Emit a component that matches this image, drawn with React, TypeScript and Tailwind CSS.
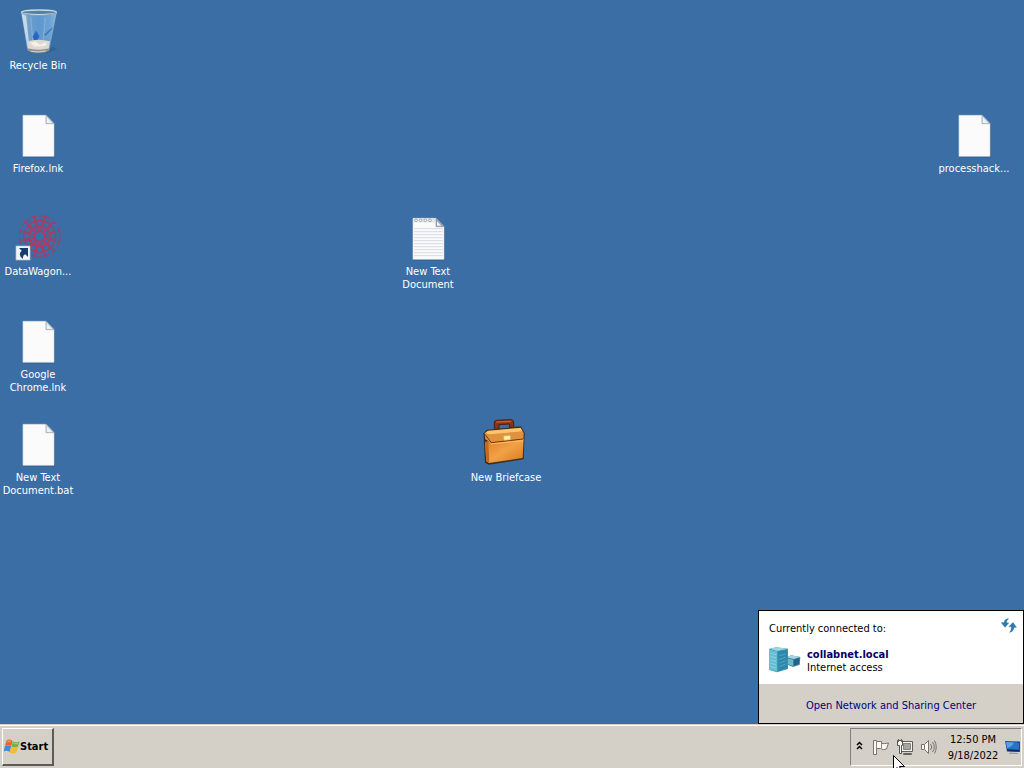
import type { ReactNode } from "react";

function RecycleBinIcon() {
  return (
    <svg viewBox="42 24 144 144" className="size-12 overflow-visible" aria-hidden="true">
      <defs>
        <linearGradient id="glass" x1="0" x2="1">
          <stop offset="0" stopColor="#b9d3e6" />
          <stop offset=".2" stopColor="#6f9fca" />
          <stop offset=".5" stopColor="#5f97ce" />
          <stop offset=".8" stopColor="#6ba3d4" />
          <stop offset="1" stopColor="#8db7d6" />
        </linearGradient>
      </defs>
      <path d="M132 150 L160 140 L172 148 L140 160 Z" fill="#2c5585" opacity=".5" />
      <path d="M64 38 L170 38 L148 150 Q115 166 82 150 Z" fill="url(#glass)" />
      <path d="M66 42 L84 148 L90 150 L78 48 Z" fill="#d5e6ef" opacity=".75" />
      <path d="M92 52 L98 120 M136 52 L130 122" stroke="#90b9dc" strokeWidth="4" opacity=".6" />
      <path d="M98 110 L108 92 L118 108 L112 122 L102 120 Z" fill="#2568c4" />
      <path d="M132 104 L158 80 L154 90 L136 108 Z" fill="#4278b0" />
      <path d="M82 124 Q115 114 150 124 L146 146 Q115 156 84 146 Z" fill="#dcd8d4" />
      <path d="M90 128 L106 124 L120 134 L140 126 L136 138 L104 140 Z" fill="#f5efe7" />
      <path d="M82 145 Q115 153 149 145 L146 154 Q115 164 86 154 Z" fill="#95938f" />
      <path d="M92 154 Q115 158 138 153" stroke="#d9d0ba" strokeWidth="3" fill="none" />
      <ellipse cx="117" cy="37" rx="52" ry="7" fill="#557f9e" stroke="#c6d9e4" strokeWidth="4" />
      <path d="M68 41 Q117 53 168 40" fill="none" stroke="#7da2b8" strokeWidth="3" />
    </svg>
  );
}

function FileIcon({ lined = false }: { lined?: boolean }) {
  return (
    <svg viewBox="0 0 144 144" className="size-12 overflow-visible" aria-hidden="true">
      <path d="M27 15 H98 L123 40 V139 H27 Z" fill="#2b4f78" opacity=".7" />
      <path d="M27 13 H96 L120 38 V136 H27 Z" fill="#fbfbfb" stroke="#d5dce2" strokeWidth="2" />
      {lined && (
        <>
          <path
            d="M31 44H116M31 53H116M31 62H116M31 71H116M31 80H116M31 89H116M31 98H116M31 107H116M31 116H116M31 125H116"
            stroke="#d3dae6"
            strokeWidth="3"
          />
          <path d="M28 14 H95 V25 H28 Z" fill="#e4e6e8" />
          <g fill="#fafafa" stroke="#84898e" strokeWidth="2">
            <circle cx="36" cy="19" r="4" />
            <circle cx="50" cy="19" r="4" />
            <circle cx="64" cy="19" r="4" />
            <circle cx="78" cy="19" r="4" />
          </g>
        </>
      )}
      <path d="M96 13 L120 38 H96 Z" fill={lined ? "#9aa3ad" : "#dde4ea"} stroke="#8b98a4" strokeWidth="2" />
      <path d="M99 22 L112 35 H99 Z" fill="#f1f4f6" />
    </svg>
  );
}

const petals = [0, 30, 60, 90, 120, 150, 180, 210, 240, 270, 300, 330];

function DataWagonIcon() {
  return (
    <svg viewBox="42 27 144 144" className="size-12 overflow-visible" aria-hidden="true">
      <g fill="none" stroke="#c92f50" strokeWidth="3" opacity=".8">
        {petals.map((angle) => (
          <g key={angle} transform={`rotate(${angle} 119 94)`}>
            <path d="M119 79 C136 70 134 48 119 46 C104 48 102 70 119 79" />
            <path d="M119 66 C136 58 140 36 127 29 M119 66 C102 58 98 36 111 29" strokeDasharray="12 3" />
          </g>
        ))}
        <circle cx="119" cy="94" r="15" strokeWidth="4" />
        <circle cx="119" cy="94" r="32" strokeDasharray="8 5" />
        <circle cx="119" cy="94" r="48" strokeDasharray="7 6" />
        <circle cx="119" cy="94" r="61" strokeDasharray="12 10" />
      </g>
      <rect x="48" y="123" width="42" height="42" fill="#f1f5fa" stroke="#b4c3d4" strokeWidth="2" />
      <path d="M57 129 H84 V156 L76 148 Q67 151 69 162 Q52 150 65 137 Z" fill="#173c6b" />
    </svg>
  );
}

function BriefcaseIcon() {
  return (
    <svg viewBox="51 30 144 144" className="size-12 overflow-visible" aria-hidden="true">
      <defs>
        <linearGradient id="leather" x1="0" y1="0" x2="1" y2="1">
          <stop offset="0" stopColor="#e07a20" />
          <stop offset=".5" stopColor="#f1a246" />
          <stop offset="1" stopColor="#d9771e" />
        </linearGradient>
      </defs>
      <path d="M88 58 V36 Q89 31 96 31 L139 29 Q145 30 146 36 V52 L134 53 V42 L102 44 V57 Z" fill="#8f3115" stroke="#41221a" strokeWidth="3" />
      <path d="M94 36 L139 34" stroke="#d4582a" strokeWidth="4" />
      <path d="M56 70 L66 59 L168 49 L179 70 L176 148 L72 164 L60 158 L57 102 Z" fill="#3b2e20" />
      <path d="M60 96 L71 94 L176 86 L173 144 L72 159 L64 154 Z" fill="url(#leather)" />
      <path d="M60 96 L70 94 L73 158 L64 154 Z" fill="#c7681f" />
      <path d="M59 70 L68 62 L167 53 L176 70 L175 88 L79 98 L61 88 Z" fill="#e0923f" />
      <path d="M61 69 L70 63 L167 54 L172 64 L72 73 Z" fill="#ffc56e" />
      <path d="M60 73 L79 98 L174 87" fill="none" stroke="#743311" strokeWidth="3" />
      <path d="M77 102 L174 92" stroke="#ffbc5e" strokeWidth="3" />
      <path d="M115 78 L136 76 L137 89 L117 91 Z" fill="#fff2ad" stroke="#d7a34c" strokeWidth="2" />
    </svg>
  );
}

function ServerIcon() {
  return (
    <svg viewBox="26 24 96 81" className="h-[27px] w-8 shrink-0" aria-hidden="true">
      <path d="M78 55 L92 49 L120 54 L118 77 L98 84 L78 76 Z" fill="#397f9e" />
      <path d="M78 55 L92 49 L120 54 L100 60 Z" fill="#a7d5df" />
      <path d="M80 58 L98 62 V81 L80 75 Z" fill="#6fb8cb" />
      <path d="M101 63 L116 57 V75 L101 80 Z" fill="#275f8b" />
      <path d="M27 29 L48 25 L83 29 V90 L50 100 L27 93 Z" fill="#3c9ab6" />
      <path d="M27 29 L48 25 L83 29 L51 36 Z" fill="#9dd5df" />
      <path d="M28 32 L50 37 V98 L28 92 Z" fill="#66bed2" />
      <path d="M54 37 L81 32 V88 L54 97 Z" fill="#2e88ab" />
      <path d="M31 43l16 4M31 53l16 4M31 63l16 4M31 73l16 4M31 83l16 4" stroke="#a5dde6" strokeWidth="2" />
      <path d="M57 50l19-5M57 61l19-6M57 72l19-7M57 83l19-8M84 66l10 2M84 72l10 2" stroke="#64b8ca" strokeWidth="2" />
    </svg>
  );
}

function RefreshIcon() {
  return (
    <svg viewBox="20 34 48 44" className="h-[15px] w-4" aria-hidden="true">
      <g fill="#3179ab" stroke="#b5d5e9" strokeWidth="2" paintOrder="stroke">
        <path d="M43 35 Q30 36 29 47 H20 L32 62 L44 48 H37 Q36 42 43 35Z" />
        <path d="M45 77 Q58 75 59 62 H67 L56 46 L43 60 H51 Q52 70 45 77Z" />
      </g>
    </svg>
  );
}

function WindowsLogo() {
  return (
    <svg viewBox="11 71 49 44" className="h-[15px] w-4 shrink-0" aria-hidden="true">
      <path d="M19 75 Q27 68 37 76 L33 92 Q24 85 14 91 Z" fill="#e8642c" />
      <path d="M38 77 Q48 83 59 77 L54 94 Q45 99 34 93 Z" fill="#75b33c" />
      <path d="M14 92 Q23 86 33 93 L28 110 Q20 103 10 108 Z" fill="#3e8ed4" />
      <path d="M33 94 Q43 100 54 95 L49 112 Q38 117 28 111 Z" fill="#f4bd30" />
      <path d="M22 76 Q28 72 33 76 L31 81 Q25 77 20 81Z M40 80 Q48 84 55 80 L53 85 Q46 88 39 84Z" fill="#fff" opacity=".3" />
    </svg>
  );
}

function FlagIcon() {
  return (
    <svg viewBox="0 0 16 16" className="size-4" aria-hidden="true">
      <path d="M.5 1.5 H3.5 V2.500 H8.500 V4.500 Q11 5 15.500 4 L13.500 10 Q10 11.500 7.500 9.500 H3.500 V15.500 H.5 Z" fill="#faf9f5" stroke="#77736c" />
      <path d="M3.500 3 V9.500 M8.500 4 V9" stroke="#8b8780" />
    </svg>
  );
}

function NetworkIcon() {
  return (
    <svg viewBox="0 0 16 16" className="size-4" aria-hidden="true">
      <path d="M4.500 2.500 H15.500 V12.500 H4.500 Z" fill="#f6f5f1" stroke="#5f5d59" />
      <path d="M6.500 4.500 H13.500 V10.500 H6.500 Z" fill="#a8a6a0" stroke="#85837d" />
      <path d="M6.500 14.500 H14.500 V15.500 H6.500 Z" fill="#f6f5f1" stroke="#64625d" />
      <path d="M.5 1.500 H5.500 V6.500 H4.500 V14.500 H2.500 V6.500 H.5 Z" fill="#f8f7f3" stroke="#555550" />
      <path d="M1.500 0 V3 M4.500 0 V3" stroke="#65635f" />
    </svg>
  );
}

function SpeakerIcon() {
  return (
    <svg viewBox="0 0 16 16" className="size-4" fill="none" stroke="#76736e" aria-hidden="true">
      <path d="M.5 5.500 H3.500 L7.500 1.500 V14.500 L3.500 10.500 H.5 Z" fill="#fbfaf7" />
      <path d="M3.500 6V10" />
      <path d="M9.500 5 Q12 8 9.500 11 M11.500 3 Q15 8 11.500 13 M13.500 1.500 Q17 8 13.500 14.500" />
    </svg>
  );
}

function DesktopIcon() {
  return (
    <svg viewBox="0 0 16 16" className="size-4" aria-hidden="true">
      <path d="M0 2 L15 2.500 V13 L2 12.500 Z" fill="#174a9c" />
      <path d="M1 3 L14 3.500 V10.500 L2.500 10 Z" fill="#2873ca" />
      <path d="M1 3 L9 3.500 Q7 8 2 9Z" fill="#5ca0e2" />
      <path d="M2 10.500 L14 11 V12.500 L2.500 12Z" fill="#102b59" />
      <path d="M5 13.500 L13 14 V15 H4Z" fill="#8e9daf" />
    </svg>
  );
}

type Shortcut = { name: string; label: ReactNode; cell: string; icon: ReactNode };

const shortcuts: Shortcut[] = [
  { name: "Recycle Bin", label: "Recycle Bin", cell: "col-start-1 row-start-1", icon: <RecycleBinIcon /> },
  { name: "Firefox.lnk", label: "Firefox.lnk", cell: "col-start-1 row-start-2", icon: <FileIcon /> },
  { name: "DataWagon", label: "DataWagon...", cell: "col-start-1 row-start-3", icon: <DataWagonIcon /> },
  { name: "Google Chrome.lnk", label: <>Google<br />Chrome.lnk</>, cell: "col-start-1 row-start-4", icon: <FileIcon /> },
  { name: "New Text Document.bat", label: <>New Text<br />Document.bat</>, cell: "col-start-1 row-start-5", icon: <FileIcon /> },
  { name: "New Text Document", label: <>New Text<br />Document</>, cell: "col-start-6 row-start-3", icon: <FileIcon lined /> },
  { name: "New Briefcase", label: "New Briefcase", cell: "col-start-7 row-start-5", icon: <BriefcaseIcon /> },
  { name: "processhack...", label: "processhack...", cell: "col-start-13 row-start-2", icon: <FileIcon /> },
];

function NetworkFlyout() {
  return (
    <section aria-label="Network" className="absolute right-0 bottom-0 w-[266px] border border-black bg-white">
      <div className="px-[10px] pt-[7px] pb-[10px]">
        <div className="flex h-[21px] items-start justify-between">
          <p className="pt-1">Currently connected to:</p>
          <button type="button" aria-label="Refresh" className="-mr-1">
            <RefreshIcon />
          </button>
        </div>
        <div className="mt-2 flex items-center gap-1.5">
          <ServerIcon />
          <div className="leading-[13px]">
            <p className="font-bold text-[#000066]">collabnet.local</p>
            <p>Internet access</p>
          </div>
        </div>
      </div>
      <div className="flex h-[39px] items-center justify-center bg-[#d4d0c8] pt-1">
        <a href="#sharing" className="whitespace-nowrap text-[#000080]">Open Network and Sharing Center</a>
      </div>
    </section>
  );
}

function Taskbar() {
  return (
    <footer className="flex h-11 shrink-0 items-stretch justify-between border-t border-[#d4d0c8] bg-[#d4d0c8] pr-0.5 pb-0.5 shadow-[inset_0_1px_0_#fff]">
      <button
        type="button"
        className="mt-[3px] ml-0.5 flex w-[52px] items-center border-t border-r-2 border-b-2 border-l border-t-white border-r-[#5d5b57] border-b-[#5d5b57] border-l-white pl-px font-bold"
      >
        <WindowsLogo />
        Start
      </button>
      <div className="mt-[3px] flex w-[172px] items-center border border-t-[#808080] border-r-white border-b-white border-l-[#808080] pl-1">
        <button type="button" aria-label="Show hidden icons" className="flex w-[18px] justify-start pb-1 pl-px">
          <svg viewBox="0 0 7 9" className="h-[9px] w-[7px]" fill="none" stroke="#000" strokeWidth="1.500" aria-hidden="true">
            <path d="M1 4 L3.500 1.500 L6 4 M1 8 L3.500 5.500 L6 8" />
          </svg>
        </button>
        <div className="flex gap-2">
          <button type="button" aria-label="Action Center"><FlagIcon /></button>
          <button type="button" aria-label="Network"><NetworkIcon /></button>
          <button type="button" aria-label="Volume"><SpeakerIcon /></button>
        </div>
        <div className="flex-1 pt-px pl-1 text-center leading-4 whitespace-nowrap">
          <p>12:50 PM</p>
          <p>9/18/2022</p>
        </div>
        <button type="button" aria-label="Display"><DesktopIcon /></button>
      </div>
    </footer>
  );
}

export default function App() {
  return (
    <div className="relative flex min-h-screen flex-col overflow-hidden bg-[#3a6ea5] font-['Tahoma','DejaVu_Sans_Condensed',sans-serif] text-[11px] leading-[13px] text-black">
      <main className="relative flex-1">
        <div className="grid auto-rows-[103px] grid-cols-[repeat(13,76px)] gap-x-0.5">
          {shortcuts.map((s) => (
            <button
              key={s.name}
              type="button"
              aria-label={s.name}
              className={`${s.cell} flex flex-col items-center justify-start gap-[3px] pt-2 whitespace-nowrap text-white`}
            >
              {s.icon}
              <span>{s.label}</span>
            </button>
          ))}
        </div>
        <NetworkFlyout />
      </main>
      <Taskbar />
      <svg viewBox="0 0 12 19" className="pointer-events-none absolute right-[119px] -bottom-[6px] h-[19px] w-3" aria-hidden="true">
        <path d="M.5 .5 V16 L4 12.500 L6.500 18.500 L9 17.500 L6.500 11.500 H11.500 Z" fill="#fff" stroke="#000" />
      </svg>
    </div>
  );
}
